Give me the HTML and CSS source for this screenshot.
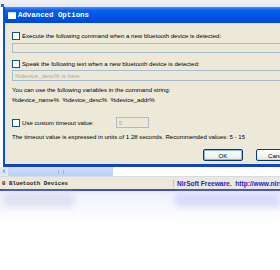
FILE: index.html
```html
<!DOCTYPE html>
<html lang="en">
<head>
  <meta charset="UTF-8">
  <title>Advanced Options</title>
  <link rel="stylesheet" href="styles.css">
</head>
<body>
  <div class="screen">
    <div class="top-strip"><span class="parent-corner"></span></div>

    <!-- Dialog window -->
    <div class="dialog">
      <div class="titlebar">
        <span class="title-icon"></span>
        <span class="title-text">Advanced Options</span>
      </div>

      <div class="content">
        <label class="check-row">
          <span class="checkbox"></span>
          <span>Execute the following command when a new bluetooth device is detected:</span>
        </label>
        <div class="edit edit-command"></div>

        <label class="check-row row-speak">
          <span class="checkbox"></span>
          <span>Speak the following text when a new bluetooth device is detected:</span>
        </label>
        <div class="edit edit-speak">%device_desc% is here</div>

        <p class="line line-vars">You can use the following variables in the command string:</p>
        <p class="line">%device_name%&nbsp; %device_desc%&nbsp; %device_addr%</p>

        <div class="timeout-row">
          <label class="check-row">
            <span class="checkbox"></span>
            <span>Use custom timeout value:</span>
          </label>
          <div class="edit edit-timeout">5</div>
        </div>

        <p class="line line-units">The timeout value is expressed in units of 1.28 seconds. Recommended values: 5 - 15</p>

        <div class="buttons">
          <button class="btn btn-default">OK</button>
          <button class="btn btn-cancel">Cancel</button>
        </div>
      </div>
    </div>

    <!-- Parent window bottom -->
    <div class="hscroll">
      <span class="arrow">&lsaquo;</span>
      <span class="thumb"><span class="grip"></span></span>
    </div>
    <div class="statusbar">
      <span class="status-count">0 Bluetooth Devices</span>
      <span class="status-link">NirSoft Freeware.&nbsp; http://www.nirsoft.net</span>
    </div>

    <div class="reflection">
      <span class="glow glow-left"></span>
      <span class="glow glow-right"></span>
    </div>
  </div>
</body>
</html>
```

FILE: styles.css
```css
/* Base */
html, body {
  margin: 0;
  padding: 0;
  background: #fff;
}

.screen {
  width: 280px;
  height: 270px;
  overflow: hidden;
  font-family: "Liberation Sans", Arial, sans-serif;
  font-size: 6.1px;
  color: #000;
}

/* Strip above the dialog */
.top-strip {
  height: 7px;
  background: linear-gradient(to bottom, #f2f2f2, #dfe6f6);
  position: relative;
}

.parent-corner {
  position: absolute;
  left: 1px;
  top: 4px;
  width: 3px;
  height: 3px;
  background: #2d62d8;
}

/* Dialog */
.dialog {
  margin-left: 3px;
  width: 300px;
  border-left: 2px solid #0b4fd8;
  border-bottom: 3px solid #1442c4;
  background: #ece9d8;
}

.titlebar {
  height: 16px;
  display: flex;
  align-items: center;
  gap: 2px;
  padding-left: 3px;
  background: linear-gradient(to bottom, #4d93f7 0%, #0a5ef0 20%, #0054e8 60%, #0047d6 100%);
}

.title-icon {
  width: 8px;
  height: 6px;
  background: #fff;
  border-top: 1px solid #cfe0ff;
}

.title-text {
  font-family: "Liberation Mono", "Courier New", monospace;
  font-weight: bold;
  font-size: 7.4px;
  color: #fff;
}

.content {
  padding: 8px 0 5px 7px;
  height: 128px;
}

/* Checkbox rows */
.check-row {
  display: flex;
  align-items: center;
  gap: 2px;
  height: 9px;
  white-space: nowrap;
}

.checkbox {
  width: 6px;
  height: 6px;
  background: #fff;
  border: 1px solid #1c5180;
  flex-shrink: 0;
}

.row-speak {
  margin-top: 6px;
}

/* Edit boxes */
.edit {
  box-sizing: border-box;
  border: 1px solid #a9bdd0;
  background: #ece9d8;
  color: #aca899;
  padding-left: 2px;
  white-space: nowrap;
}

.edit-command {
  margin-top: 3px;
  height: 10px;
}

.edit-speak {
  margin-top: 2px;
  height: 11px;
  line-height: 9px;
}

.edit-timeout {
  width: 33px;
  height: 11px;
  line-height: 9px;
  margin-left: 22px;
}

/* Text lines */
.line {
  margin: 0;
  height: 10px;
  line-height: 10px;
  white-space: nowrap;
}

.line-vars {
  margin-top: 4px;
}

.timeout-row {
  display: flex;
  align-items: center;
  margin-top: 12px;
  height: 11px;
}

.line-units {
  margin-top: 4px;
}

/* Buttons */
.buttons {
  display: flex;
  gap: 13px;
  margin-top: 7px;
  padding-left: 191px;
}

.btn {
  width: 40px;
  height: 12px;
  padding: 0;
  flex-shrink: 0;
  font-family: "Liberation Sans", Arial, sans-serif;
  font-size: 6.1px;
  color: #000;
  border: 1px solid #003c74;
  border-radius: 2px;
  background: linear-gradient(to bottom, #ffffff, #f0f0ea 80%, #d6d0c5);
}

.btn-cancel {
  text-align: left;
  padding-left: 11px;
}

.btn-default {
  box-shadow: inset 0 0 0 1px #8eb3ef;
}

/* Parent window scrollbar */
.hscroll {
  height: 9px;
  display: flex;
  background: #fff;
  border-bottom: 1px solid #d7dbe8;
}

.arrow {
  width: 8px;
  font-size: 9px;
  line-height: 8px;
  text-align: center;
  color: #4d6185;
  background: #dde8fb;
}

.thumb {
  width: 105px;
  background: linear-gradient(to bottom, #cfdffb, #bcd1f7);
  display: flex;
  justify-content: center;
  align-items: center;
}

.grip {
  width: 4px;
  height: 4px;
  border-left: 1px solid #9db3e0;
  border-right: 1px solid #9db3e0;
}

/* Status bar */
.statusbar {
  height: 12px;
  display: flex;
  align-items: center;
  background: #ece9d8;
  border-bottom: 2px solid #3a4bd0;
  white-space: nowrap;
}

.status-count {
  width: 171px;
  flex-shrink: 0;
  padding-left: 2px;
  font-family: "Liberation Mono", "Courier New", monospace;
  font-size: 5.8px;
  font-weight: bold;
  color: #222;
  border-right: 1px solid #c5c2b2;
}

.status-link {
  padding-left: 3px;
  font-weight: bold;
  font-size: 6.6px;
  color: #2222dd;
}

/* Fading reflection below the window */
.reflection {
  height: 80px;
  position: relative;
  background: linear-gradient(to bottom, #eef0fa, #fff 40%);
}

.glow {
  position: absolute;
  top: 2px;
  height: 14px;
  filter: blur(3px);
}

.glow-left {
  left: 4px;
  width: 70px;
  background: rgba(210, 212, 235, 0.6);
}

.glow-right {
  left: 175px;
  width: 105px;
  background: rgba(190, 195, 245, 0.5);
}
```
